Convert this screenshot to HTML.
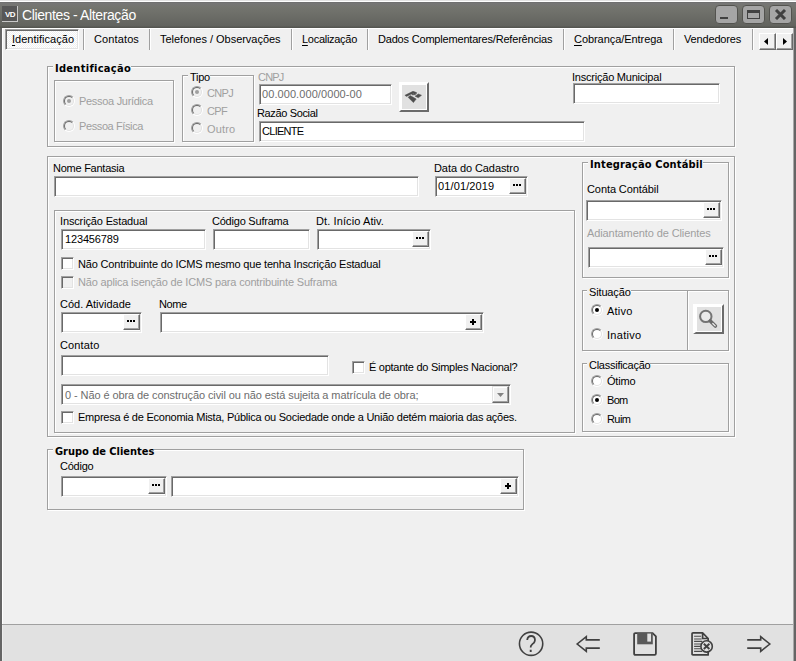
<!DOCTYPE html>
<html lang="pt-BR"><head><meta charset="utf-8"><title>Clientes - Alteração</title>
<style>
html,body{margin:0;padding:0}
body{width:796px;height:661px;overflow:hidden;background:#f0f0f0;position:relative;font-family:"Liberation Sans",sans-serif;font-size:11px;color:#000}
#w{position:absolute;left:0;top:0;width:796px;height:661px;overflow:hidden;background:#f0f0f0}
#w div,#w span,#w i,#w b,#w svg{position:absolute;box-sizing:content-box}
.t{white-space:nowrap;line-height:13px;height:13px;font-size:11px}
u{text-decoration-thickness:1px;text-underline-offset:2px}
.g{color:#9f9f9f}
.g2{color:#6d6d6d}
.b{font-weight:bold}
.bl{font-family:"DejaVu Sans Condensed","DejaVu Sans","Liberation Sans",sans-serif;font-stretch:condensed;font-weight:bold}
.lb{background:#f0f0f0;padding:0 0 0 2px}
.gb{border:1px solid #a0a0a0;box-shadow:1px 1px 0 #fff,inset 1px 1px 0 #fff}
.inp{background:#fff;border:1px solid;border-color:#a0a0a0 #fff #fff #a0a0a0;box-shadow:inset 1px 1px 0 #696969,inset -1px -1px 0 #e3e3e3}
.btn{background:#f0f0f0;border:1px solid;border-color:#fff #696969 #696969 #fff;box-shadow:inset -1px -1px 0 #a0a0a0}
.d3{left:3px;top:5px;width:2px;height:2px;background:#000;box-shadow:3px 0 0 #000,6px 0 0 #000}
.pl{left:6px;top:4px;width:2px;height:6px;background:#000}
.pl:after{content:"";position:absolute;left:-2px;top:2px;width:6px;height:2px;background:#000}
.rd{width:10px;height:10px;border-radius:50%;border:1px solid;border-color:#a0a0a0 #fff #fff #a0a0a0;transform:rotate(0deg)}
.rd b{left:0;top:0;width:8px;height:8px;border-radius:50%;border:1px solid;border-color:#696969 #e3e3e3 #e3e3e3 #696969;background:#fff}
.rd.dis b{background:#f0f0f0}
.rd i{left:3px;top:3px;width:4px;height:4px;border-radius:50%;background:#000}
.rd.dis i{background:#a0a0a0}
.ck{width:11px;height:11px;background:#fff;border:1px solid;border-color:#a0a0a0 #fff #fff #a0a0a0;box-shadow:inset 1px 1px 0 #696969,inset -1px -1px 0 #e3e3e3}
.ck.dis{background:#f0f0f0}
.ib{border:2px solid;border-color:#fff #6b6b6b #6b6b6b #fff;background:#e1e1e1;box-shadow:inset 1px 1px 0 #fff,inset -1px -1px 0 #fff}
</style></head><body><div id="w">

<div style="left:0;top:0;width:796px;height:1px;background:#e3e3e3"></div>
<div style="left:0;top:1px;width:796px;height:1px;background:#fff"></div>
<div id="tb" style="left:0;top:2px;width:796px;height:26px;background:linear-gradient(#6a6a6a 0,#767676 1px,#74756f 5px,#62635e 24px,#555651 25px,#555651 26px)"></div>
<div style="left:0;top:28px;width:2px;height:633px;background:#656565"></div>
<div style="left:793px;top:28px;width:1px;height:633px;background:#a8a8a8"></div>
<div style="left:794px;top:28px;width:2px;height:633px;background:#656565"></div>
<div style="left:2px;top:28px;width:791px;height:1px;background:#fff"></div>
<div style="left:2px;top:28px;width:1px;height:596px;background:#fff"></div>
<div style="left:2px;top:6px;width:15px;height:15px;background:#575757"></div>
<div style="left:17px;top:6px;width:1px;height:16px;background:#c8c8c8"></div>
<div style="left:2px;top:21px;width:16px;height:1px;background:#c8c8c8"></div>
<span class="t b" style="left:5px;top:9px;font-size:8px;line-height:11px;height:11px;color:#fff;letter-spacing:-0.7px">VD</span>
<span class="t" style="left:22px;top:6px;font-size:14px;line-height:18px;height:18px;color:#fff;letter-spacing:-0.38px">Clientes - Alteração</span>
<div style="left:715px;top:5px;width:21px;height:17px;border:1px solid #53534f;border-radius:4px;background:#a5a5a5"></div>
<div style="left:742px;top:5px;width:21px;height:17px;border:1px solid #53534f;border-radius:4px;background:#a5a5a5"></div>
<div style="left:769px;top:5px;width:21px;height:17px;border:1px solid #53534f;border-radius:4px;background:#a5a5a5"></div>
<div style="left:720px;top:17px;width:8px;height:2px;background:#414141"></div>
<div style="left:747px;top:10px;width:11px;height:5px;border:1px solid #414141;border-top-width:3px"></div>
<svg style="left:773px;top:9px" width="15" height="11" viewBox="0 0 15 11"><path d="M3 1 L12 10 M12 1 L3 10" stroke="#414141" stroke-width="3" fill="none"/></svg>
<div id="seltab" style="left:5px;top:29px;width:72px;height:19px;border:1px solid;border-color:#a0a0a0 #fff #fff #a0a0a0;background:conic-gradient(#fff 25%,#f0f0f0 0 50%,#fff 0 75%,#f0f0f0 0) 1px 1px/2px 2px;box-shadow:inset 1px 1px 0 #696969,inset -1px -1px 0 #e3e3e3"></div>
<div style="left:83px;top:29px;width:1px;height:21px;background:#a0a0a0"></div>
<div style="left:84px;top:29px;width:1px;height:21px;background:#fff"></div>
<div style="left:149px;top:29px;width:1px;height:21px;background:#a0a0a0"></div>
<div style="left:150px;top:29px;width:1px;height:21px;background:#fff"></div>
<div style="left:291px;top:29px;width:1px;height:21px;background:#a0a0a0"></div>
<div style="left:292px;top:29px;width:1px;height:21px;background:#fff"></div>
<div style="left:367px;top:29px;width:1px;height:21px;background:#a0a0a0"></div>
<div style="left:368px;top:29px;width:1px;height:21px;background:#fff"></div>
<div style="left:563px;top:29px;width:1px;height:21px;background:#a0a0a0"></div>
<div style="left:564px;top:29px;width:1px;height:21px;background:#fff"></div>
<div style="left:673px;top:29px;width:1px;height:21px;background:#a0a0a0"></div>
<div style="left:674px;top:29px;width:1px;height:21px;background:#fff"></div>
<div style="left:752px;top:29px;width:1px;height:21px;background:#a0a0a0"></div>
<div style="left:753px;top:29px;width:1px;height:21px;background:#fff"></div>
<span class="t " style="left:12px;top:33px;letter-spacing:0.02px;"><u>I</u>dentificação</span>
<span class="t " style="left:94px;top:33px;letter-spacing:0.12px;">Contatos</span>
<span class="t " style="left:160px;top:33px;letter-spacing:-0.02px;">Telefones / Observações</span>
<span class="t " style="left:302px;top:33px;letter-spacing:-0.28px;"><u>L</u>ocalização</span>
<span class="t " style="left:378px;top:33px;letter-spacing:-0.19px;">Dados Complementares/Referências</span>
<span class="t " style="left:574px;top:33px;letter-spacing:-0.06px;"><u>C</u>obrança/Entrega</span>
<span class="t " style="left:684px;top:33px;letter-spacing:-0.16px;">Vendedores</span>
<div class="btn" style="left:759px;top:33px;width:15px;height:15px"></div>
<div class="btn" style="left:776px;top:33px;width:15px;height:15px"></div>
<svg style="left:764px;top:38px" width="4" height="7" viewBox="0 0 4 7"><path d="M4 0 L4 7 L0 3.5 Z" fill="#000"/></svg>
<svg style="left:783px;top:38px" width="4" height="7" viewBox="0 0 4 7"><path d="M0 0 L0 7 L4 3.5 Z" fill="#000"/></svg>
<div class="gb " style="left:47px;top:66px;width:686px;height:79px"></div>
<span class="t bl lb" style="left:53px;top:62px;letter-spacing:0.29px;">Identificação</span>
<div class="gb " style="left:54px;top:80px;width:118px;height:60px"></div>
<div class="rd dis" style="left:63px;top:95px"><b></b><i></i></div>
<span class="t g" style="left:79px;top:95px;letter-spacing:-0.3px;">Pessoa Jurídica</span>
<div class="rd dis" style="left:63px;top:120px"><b></b></div>
<span class="t g" style="left:79px;top:120px;letter-spacing:-0.39px;">Pessoa Física</span>
<div class="gb " style="left:182px;top:75px;width:70px;height:65px"></div>
<span class="t lb" style="left:188px;top:71px;letter-spacing:-0.25px;">Tipo</span>
<div class="rd dis" style="left:191px;top:86px"><b></b><i></i></div>
<span class="t g" style="left:207px;top:87px;letter-spacing:-0.68px;">CNPJ</span>
<div class="rd dis" style="left:191px;top:104px"><b></b></div>
<span class="t g" style="left:207px;top:105px;letter-spacing:-0.67px;">CPF</span>
<div class="rd dis" style="left:191px;top:122px"><b></b></div>
<span class="t g" style="left:207px;top:123px;letter-spacing:0.18px;">Outro</span>
<span class="t g" style="left:258px;top:71px;letter-spacing:-0.81px;">CNPJ</span>
<div class="inp " style="left:259px;top:84px;width:131px;height:19px"><span class="t g2" style="left:2px;top:3px;letter-spacing:0.08px;">00.000.000/0000-00</span></div>
<div id="rf" class="ib" style="left:399px;top:82px;width:26px;height:26px"></div>
<svg style="left:400px;top:86px" width="28" height="22" viewBox="0 0 28 22"><path d="M4.9 9.3 L13 5.3 L16.6 6.6 L16.2 8 L13.2 6.9 L6.6 10.4 Z M15.1 10.2 L18.3 7.9 L21.5 9.3 L18.3 11.8 Z M8.1 11.3 L10.2 9.5 L16.2 13 L13.4 16.6 Z M11.6 7.6 L14.8 7.6 L15.5 8.8 L12 8.8 Z" fill="#4e4e4e" stroke="#4e4e4e" stroke-width="0.5" stroke-linejoin="round"/></svg>
<span class="t " style="left:257px;top:107px;letter-spacing:-0.36px;">Razão Social</span>
<div class="inp " style="left:259px;top:121px;width:324px;height:19px"><span class="t " style="left:2px;top:3px;letter-spacing:-0.71px;">CLIENTE</span></div>
<span class="t " style="left:572px;top:71px;letter-spacing:-0.22px;">Inscrição Municipal</span>
<div class="inp " style="left:573px;top:83px;width:145px;height:19px"></div>
<div class="gb " style="left:47px;top:156px;width:686px;height:279px"></div>
<span class="t " style="left:53px;top:162px;letter-spacing:-0.25px;">Nome Fantasia</span>
<div class="inp " style="left:54px;top:176px;width:363px;height:19px"></div>
<span class="t " style="left:434px;top:162px;letter-spacing:-0.08px;">Data do Cadastro</span>
<div class="inp " style="left:435px;top:176px;width:91px;height:19px"><span class="t " style="left:2px;top:3px;letter-spacing:0.12px;">01/01/2019</span></div>
<div class="btn" style="left:509px;top:178px;width:15px;height:14px"><i class="d3"></i></div>
<div class="gb " style="left:54px;top:210px;width:519px;height:221px"></div>
<span class="t " style="left:60px;top:215px;letter-spacing:-0.14px;">Inscrição Estadual</span>
<div class="inp " style="left:61px;top:229px;width:143px;height:19px"><span class="t " style="left:3px;top:3px;letter-spacing:-0.15px;">123456789</span></div>
<span class="t " style="left:212px;top:215px;letter-spacing:-0.22px;">Código Suframa</span>
<div class="inp " style="left:213px;top:229px;width:95px;height:19px"></div>
<span class="t " style="left:316px;top:215px;letter-spacing:0.1px;">Dt. Início Ativ.</span>
<div class="inp " style="left:317px;top:229px;width:112px;height:19px"></div>
<div class="btn" style="left:412px;top:231px;width:15px;height:14px"><i class="d3"></i></div>
<div class="ck" style="left:61px;top:257px"></div>
<span class="t " style="left:78px;top:258px;letter-spacing:-0.17px;">Não Contribuinte do ICMS mesmo que tenha Inscrição Estadual</span>
<div class="ck dis" style="left:61px;top:276px"></div>
<span class="t g" style="left:78px;top:276px;letter-spacing:-0.18px;">Não aplica isenção de ICMS para contribuinte Suframa</span>
<span class="t " style="left:60px;top:298px;">Cód. Atividade</span>
<div class="inp " style="left:61px;top:312px;width:79px;height:19px"></div>
<div class="btn" style="left:123px;top:314px;width:15px;height:14px"><i class="d3"></i></div>
<span class="t " style="left:159px;top:298px;letter-spacing:-0.44px;">Nome</span>
<div class="inp " style="left:160px;top:312px;width:322px;height:19px"></div>
<div class="btn" style="left:465px;top:314px;width:15px;height:14px"><i class="pl"></i></div>
<span class="t " style="left:60px;top:339px;letter-spacing:0.12px;">Contato</span>
<div class="inp " style="left:61px;top:355px;width:266px;height:19px"></div>
<div class="ck" style="left:352px;top:361px"></div>
<span class="t " style="left:369px;top:361px;letter-spacing:-0.27px;">É optante do Simples Nacional?</span>
<div class="inp " style="left:61px;top:384px;width:448px;height:19px"><span class="t g2" style="left:3px;top:4px;letter-spacing:-0.09px;">0 - Não é obra de construção civil ou não está sujeita a matrícula de obra;</span></div>
<div class="btn" style="left:492px;top:386px;width:15px;height:15px;border-top-color:#e3e3e3;border-left-color:#e3e3e3;box-shadow:inset -1px -1px 0 #a0a0a0,inset 1px 1px 0 #fff"></div>
<svg style="left:497px;top:393px" width="7" height="4" viewBox="0 0 7 4"><path d="M0 0 L7 0 L3.5 4 Z" fill="#838383"/></svg>
<div class="ck" style="left:61px;top:411px"></div>
<span class="t " style="left:78px;top:411px;letter-spacing:-0.24px;">Empresa é de Economia Mista, Pública ou Sociedade onde a União detém maioria das ações.</span>
<div class="gb " style="left:582px;top:162px;width:145px;height:114px"></div>
<span class="t bl lb" style="left:588px;top:158px;letter-spacing:0.15px;">Integração Contábil</span>
<span class="t " style="left:587px;top:183px;letter-spacing:-0.09px;">Conta Contábil</span>
<div class="inp " style="left:586px;top:200px;width:134px;height:19px"></div>
<div class="btn" style="left:703px;top:202px;width:15px;height:14px"><i class="d3"></i></div>
<span class="t g" style="left:587px;top:227px;letter-spacing:-0.1px;">Adiantamento de Clientes</span>
<div class="inp " style="left:588px;top:247px;width:134px;height:19px"></div>
<div class="btn" style="left:705px;top:249px;width:15px;height:14px"><i class="d3"></i></div>
<div class="gb " style="left:582px;top:290px;width:104px;height:59px"></div>
<div class="gb " style="left:687px;top:290px;width:40px;height:59px"></div>
<span class="t lb" style="left:587px;top:286px;letter-spacing:-0.15px;">Situação</span>
<div class="rd" style="left:591px;top:304px"><b></b><i></i></div>
<span class="t " style="left:607px;top:305px;letter-spacing:0.21px;">Ativo</span>
<div class="rd" style="left:591px;top:328px"><b></b></div>
<span class="t " style="left:607px;top:329px;letter-spacing:0.3px;">Inativo</span>
<div id="sb" class="ib" style="left:693px;top:304px;width:27px;height:26px;border-left-width:3px;width:26px"></div>
<svg style="left:698px;top:309px" width="22" height="22" viewBox="0 0 22 22"><circle cx="7.8" cy="7.4" r="5.7" fill="#eaeaea" stroke="#747474" stroke-width="2"/><path d="M12.3 12 L17.4 17.1" stroke="#6a6a6a" stroke-width="3.6" stroke-linecap="round"/><path d="M14.8 14.5 L17.2 16.9" stroke="#ececec" stroke-width="1.3" stroke-linecap="round"/></svg>
<div class="gb " style="left:582px;top:363px;width:145px;height:67px"></div>
<span class="t lb" style="left:587px;top:359px;letter-spacing:-0.26px;">Classificação</span>
<div class="rd" style="left:591px;top:375px"><b></b></div>
<span class="t " style="left:607px;top:375px;letter-spacing:-0.19px;">Ótimo</span>
<div class="rd" style="left:591px;top:394px"><b></b><i></i></div>
<span class="t " style="left:607px;top:394px;letter-spacing:-0.71px;">Bom</span>
<div class="rd" style="left:591px;top:413px"><b></b></div>
<span class="t " style="left:607px;top:413px;letter-spacing:-0.57px;">Ruim</span>
<div class="gb " style="left:47px;top:449px;width:475px;height:59px"></div>
<span class="t bl lb" style="left:53px;top:445px;letter-spacing:-0.03px;">Grupo de Clientes</span>
<span class="t " style="left:60px;top:460px;letter-spacing:-0.23px;">Código</span>
<div class="inp " style="left:61px;top:476px;width:104px;height:19px"></div>
<div class="btn" style="left:148px;top:478px;width:15px;height:14px"><i class="d3"></i></div>
<div class="inp " style="left:171px;top:476px;width:346px;height:19px"></div>
<div class="btn" style="left:500px;top:478px;width:15px;height:14px"><i class="pl"></i></div>
<div style="left:2px;top:624px;width:791px;height:1px;background:#a0a0a0"></div>
<div id="bb" style="left:2px;top:625px;width:791px;height:36px;background:#e1e1e1;box-shadow:inset 1px 0 0 #ececec"></div>
<svg style="left:516px;top:629px;will-change:transform" width="30" height="30" viewBox="0 0 30 30"><circle cx="15.1" cy="14.75" r="11.65" fill="none" stroke="#404040" stroke-width="1.6"/><text transform="translate(15.1 0) scale(.88 1.04)" x="0" y="22.3" text-anchor="middle" font-family="Liberation Sans, sans-serif" font-size="22.6" fill="#404040">?</text></svg>
<svg style="left:575px;top:633px" width="27" height="22" viewBox="0 0 27 22"><path d="M24.8 6.9 L11.3 6.9 L11.3 3.6 L2.2 11 L11.3 18.4 L11.3 15.1 L24.8 15.1" fill="none" stroke="#404040" stroke-width="1.6"/></svg>
<svg style="left:632px;top:631px" width="26" height="26" viewBox="0 0 26 26"><path d="M3.4 2.1 L20.6 2.1 L23.9 5.4 L23.9 22.6 Q23.9 23.9 22.6 23.9 L3.4 23.9 Q2.1 23.9 2.1 22.6 L2.1 3.4 Q2.1 2.1 3.4 2.1 Z" fill="none" stroke="#404040" stroke-width="1.8"/><rect x="5.2" y="2" width="15.6" height="11.3" fill="#595959"/><rect x="15.3" y="2.6" width="3.7" height="8" fill="#e1e1e1"/></svg>
<svg style="left:690px;top:631px" width="26" height="26" viewBox="0 0 26 26"><path d="M3 1.95 L12.6 1.95 L18.15 7.5 L18.15 23.95 L3 23.95 Q2.05 23.95 2.05 23 L2.05 2.9 Q2.05 1.95 3 1.95 Z M12.6 1.95 L12.6 7.5 L18.15 7.5" fill="none" stroke="#404040" stroke-width="1.7" stroke-linejoin="round"/><path d="M4.1 5.3h7M4.1 8h7.5M4.1 10.4h8M4.1 13h7M4.1 15.4h6.5M4.1 17.8h7M4.1 20.4h8" stroke="#4a4a4a" stroke-width="1.1"/><circle cx="16.6" cy="15.4" r="5.7" fill="#e1e1e1" stroke="#404040" stroke-width="1.6"/><path d="M13.8 12.8 L19.4 18 M19.4 12.8 L13.8 18" stroke="#404040" stroke-width="1.9"/></svg>
<svg style="left:745px;top:633px" width="27" height="22" viewBox="0 0 27 22"><path d="M2.2 6.9 L15.7 6.9 L15.7 3.6 L24.8 11 L15.7 18.4 L15.7 15.1 L2.2 15.1" fill="none" stroke="#404040" stroke-width="1.6"/></svg>
</div></body></html>
